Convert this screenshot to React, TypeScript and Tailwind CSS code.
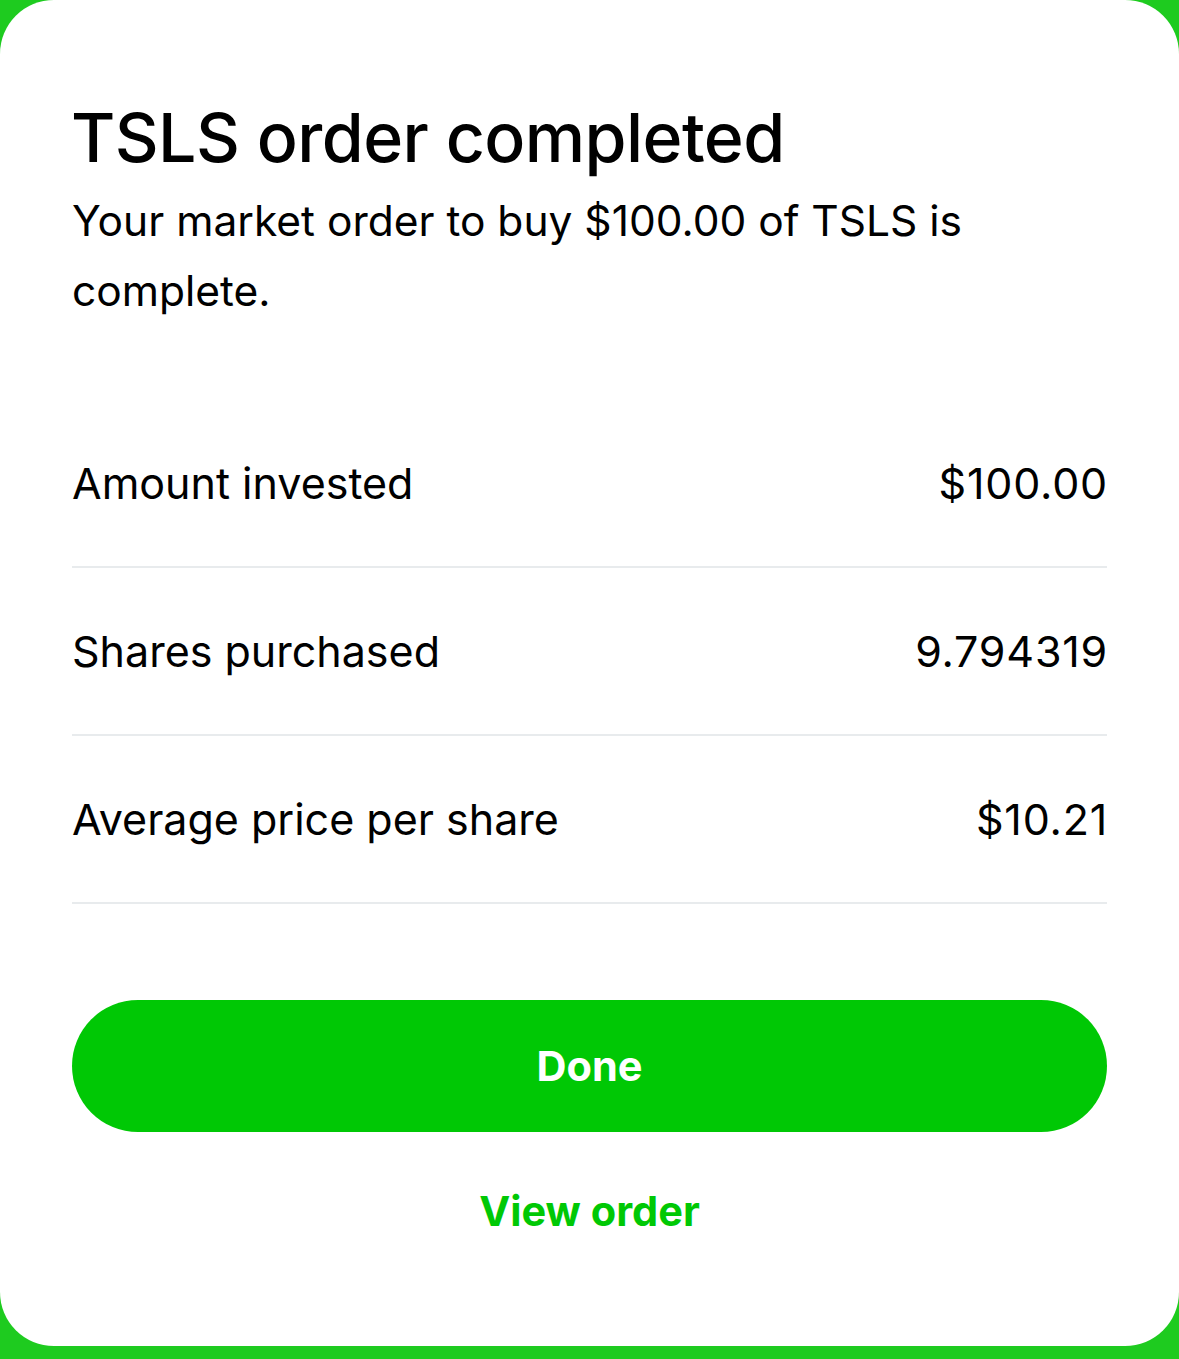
export default function App() {
  const rows = [
    ["Amount invested", "$100.00"],
    ["Shares purchased", "9.794319"],
    ["Average price per share", "$10.21"],
  ];
  return (
    <div className="w-[1179px] h-[1359px] bg-[#1ECB1F] overflow-hidden" style={{ fontFamily: "Inter, 'Noto Sans', sans-serif" }}>
      <div className="h-[1346px] bg-white rounded-[54px] px-[72px] pt-[96px] flex flex-col">
        <h1 className="text-[68px] leading-[86px] font-medium text-black tracking-[-0.6px] -mt-[2px] -ml-[1px]">TSLS order completed</h1>
        <p className="text-[42.5px] leading-[70px] text-black mt-[6px]">
          Your market order to buy $100.00 of TSLS is complete.
        </p>
        <div className="mt-[74px] flex flex-col">
          {rows.map(([l, v]) => (
            <div key={l} className="h-[168px] flex items-center justify-between border-b-2 border-[#E8EBED] text-[43px] text-black">
              <span>{l}</span>
              <span className="tracking-[0.8px] -mr-[1px]">{v}</span>
            </div>
          ))}
        </div>
        <button className="mt-[96px] h-[132px] w-full rounded-full bg-[#00C805] text-white text-[41.5px] font-bold">Done</button>
        <button className="mt-[48px] text-[#00C805] text-[41.5px] font-bold self-center">View order</button>
      </div>
    </div>
  );
}
